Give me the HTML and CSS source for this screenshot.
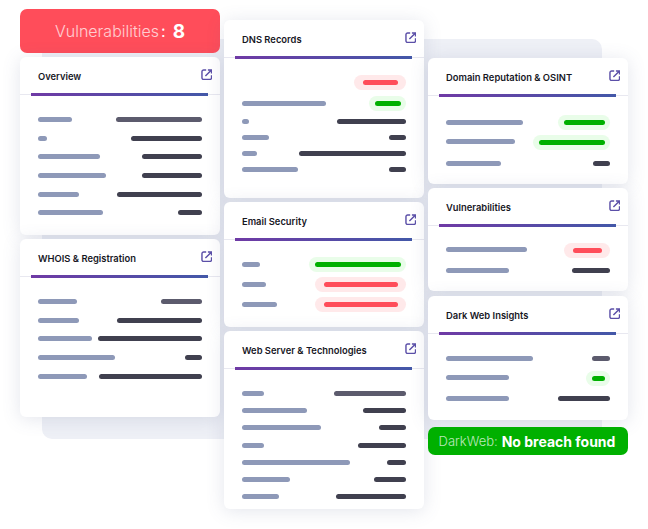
FILE: index.html
```html
<!DOCTYPE html>
<html>

<head>
<link rel="stylesheet" href="styles.css">
<title>Domain report</title>
</head>
<body>
  <svg class="sprite">
    <symbol id="open" viewBox="0 0 12 12">
      <path d="M5.4 1H2.8A1.8 1.8 0 0 0 1 2.8v6.4A1.8 1.8 0 0 0 2.8 11h6.4A1.8 1.8 0 0 0 11 9.2V6.6"/>
      <path d="M4.6 7.4 10.4 1.6M7.2 1H11v3.8"/>
    </symbol>
  </svg>

  <div class="board">
    <div class="board__backdrop"></div>

    <div class="column column--first">
      <div class="banner banner--red">
        <span class="banner__label">Vulnerabilities</span><span class="banner__colon">:</span>
        <b class="banner__value banner__value--big">8</b>
      </div>

      <section class="card card--tall">
        <div class="card__head">
          <h3 class="card__title">Overview</h3>
          <svg class="card__icon"><use href="#open"/></svg>
        </div>
        <div class="card__rule"></div>
        <div class="rows rows--overview">
          <div class="row"><i class="bar bar--label" style="width:34px"></i><i class="bar bar--soft" style="width:86px"></i></div>
          <div class="row"><i class="bar bar--label" style="width:9px"></i><i class="bar bar--value" style="width:71px"></i></div>
          <div class="row"><i class="bar bar--label" style="width:62px"></i><i class="bar bar--value" style="width:60px"></i></div>
          <div class="row"><i class="bar bar--label" style="width:68px"></i><i class="bar bar--value" style="width:60px"></i></div>
          <div class="row"><i class="bar bar--label" style="width:41px"></i><i class="bar bar--value" style="width:85px"></i></div>
          <div class="row"><i class="bar bar--label" style="width:65px"></i><i class="bar bar--value" style="width:24px"></i></div>
        </div>
      </section>

      <section class="card card--tall">
        <div class="card__head">
          <h3 class="card__title">WHOIS &amp; Registration</h3>
          <svg class="card__icon"><use href="#open"/></svg>
        </div>
        <div class="card__rule"></div>
        <div class="rows rows--overview">
          <div class="row"><i class="bar bar--label" style="width:39px"></i><i class="bar bar--soft" style="width:41px"></i></div>
          <div class="row"><i class="bar bar--label" style="width:41px"></i><i class="bar bar--value" style="width:85px"></i></div>
          <div class="row"><i class="bar bar--label" style="width:54px"></i><i class="bar bar--value" style="width:104px"></i></div>
          <div class="row"><i class="bar bar--label" style="width:77px"></i><i class="bar bar--value" style="width:17px"></i></div>
          <div class="row"><i class="bar bar--label" style="width:49px"></i><i class="bar bar--value" style="width:103px"></i></div>
        </div>
      </section>
    </div>

    <div class="column column--second">
      <section class="card card--tall">
        <div class="card__head">
          <h3 class="card__title">DNS Records</h3>
          <svg class="card__icon"><use href="#open"/></svg>
        </div>
        <div class="card__rule"></div>
        <div class="rows rows--dns">
          <div class="row row--high"><span></span><span class="pill pill--red"><i class="bar bar--red" style="width:35px"></i></span></div>
          <div class="row row--high"><i class="bar bar--label" style="width:84px"></i><span class="pill pill--green"><i class="bar bar--green" style="width:26px"></i></span></div>
          <div class="row"><i class="bar bar--label" style="width:7px"></i><i class="bar bar--value" style="width:69px"></i></div>
          <div class="row"><i class="bar bar--label" style="width:27px"></i><i class="bar bar--value" style="width:17px"></i></div>
          <div class="row"><i class="bar bar--label" style="width:15px"></i><i class="bar bar--value" style="width:107px"></i></div>
          <div class="row"><i class="bar bar--label" style="width:56px"></i><i class="bar bar--value" style="width:17px"></i></div>
        </div>
      </section>

      <section class="card card--mid">
        <div class="card__head">
          <h3 class="card__title">Email Security</h3>
          <svg class="card__icon"><use href="#open"/></svg>
        </div>
        <div class="card__rule"></div>
        <div class="rows rows--wide">
          <div class="row"><i class="bar bar--label" style="width:18px"></i><span class="pill pill--green"><i class="bar bar--green" style="width:86px"></i></span></div>
          <div class="row"><i class="bar bar--label" style="width:24px"></i><span class="pill pill--red"><i class="bar bar--red" style="width:74px"></i></span></div>
          <div class="row"><i class="bar bar--label" style="width:35px"></i><span class="pill pill--red"><i class="bar bar--red" style="width:74px"></i></span></div>
        </div>
      </section>

      <section class="card card--tall">
        <div class="card__head">
          <h3 class="card__title">Web Server &amp; Technologies</h3>
          <svg class="card__icon"><use href="#open"/></svg>
        </div>
        <div class="card__rule"></div>
        <div class="rows rows--web">
          <div class="row"><i class="bar bar--label" style="width:22px"></i><i class="bar bar--soft" style="width:72px"></i></div>
          <div class="row"><i class="bar bar--label" style="width:65px"></i><i class="bar bar--value" style="width:43px"></i></div>
          <div class="row"><i class="bar bar--label" style="width:79px"></i><i class="bar bar--value" style="width:27px"></i></div>
          <div class="row"><i class="bar bar--label" style="width:22px"></i><i class="bar bar--value" style="width:48px"></i></div>
          <div class="row"><i class="bar bar--label" style="width:108px"></i><i class="bar bar--value" style="width:19px"></i></div>
          <div class="row"><i class="bar bar--label" style="width:48px"></i><i class="bar bar--value" style="width:32px"></i></div>
          <div class="row"><i class="bar bar--label" style="width:37px"></i><i class="bar bar--value" style="width:70px"></i></div>
        </div>
      </section>
    </div>

    <div class="column column--third">
      <section class="card card--mid card--domain">
        <div class="card__head">
          <h3 class="card__title">Domain Reputation &amp; OSINT</h3>
          <svg class="card__icon"><use href="#open"/></svg>
        </div>
        <div class="card__rule"></div>
        <div class="rows rows--domain">
          <div class="row"><i class="bar bar--label" style="width:77px"></i><span class="pill pill--green"><i class="bar bar--green" style="width:41px"></i></span></div>
          <div class="row row--raised"><i class="bar bar--label" style="width:69px"></i><span class="pill pill--green"><i class="bar bar--green" style="width:66px"></i></span></div>
          <div class="row"><i class="bar bar--label" style="width:55px"></i><i class="bar bar--value" style="width:17px"></i></div>
        </div>
      </section>

      <section class="card card--short">
        <div class="card__head">
          <h3 class="card__title">Vulnerabilities</h3>
          <svg class="card__icon"><use href="#open"/></svg>
        </div>
        <div class="card__rule"></div>
        <div class="rows rows--wide">
          <div class="row row--raised"><i class="bar bar--label" style="width:81px"></i><span class="pill pill--red"><i class="bar bar--red" style="width:29px"></i></span></div>
          <div class="row"><i class="bar bar--label" style="width:63px"></i><i class="bar bar--value" style="width:38px"></i></div>
        </div>
      </section>

      <section class="card card--dark">
        <div class="card__head">
          <h3 class="card__title">Dark Web Insights</h3>
          <svg class="card__icon"><use href="#open"/></svg>
        </div>
        <div class="card__rule"></div>
        <div class="rows rows--wide">
          <div class="row"><i class="bar bar--label" style="width:87px"></i><i class="bar bar--soft" style="width:18px"></i></div>
          <div class="row row--raised"><i class="bar bar--label" style="width:63px"></i><span class="pill pill--green"><i class="bar bar--green" style="width:13px"></i></span></div>
          <div class="row"><i class="bar bar--label" style="width:63px"></i><i class="bar bar--value" style="width:52px"></i></div>
        </div>
      </section>

      <div class="banner banner--green">
        <span class="banner__label">DarkWeb:</span>
        <b class="banner__value">No breach found</b>
      </div>
    </div>
  </div>
</body>
</html>
```

FILE: styles.css
```css
* { box-sizing: border-box; }
body {
  margin: 0;
  background: white;
  font-family: Inter, "Noto Sans", sans-serif;
}

.sprite {
  display: none;
}

.board {
  position: relative;
  display: flex;
  gap: 4px;
  width: 648px;
  height: 529px;
  padding-left: 20px;
  overflow: hidden;
}

/* pale panel behind the cards */
.board__backdrop {
  position: absolute;
  top: 39px;
  left: 42px;
  width: 560px;
  height: 400px;
  border-radius: 10px;
  background: #eef0f6;
}

.column {
  position: relative;
  display: flex;
  flex-direction: column;
  width: 200px;
  gap: 4px;
}

.column--first { padding-top: 9px; }
.column--second { padding-top: 20px; }
.column--third { padding-top: 58px; }

.banner {
  display: flex;
  align-items: center;
  justify-content: center;
  border-radius: 7px;
  color: white;
}

.banner--red {
  height: 44px;
  background: #ff4d5a;
  font-size: 16px;
}

.banner--green {
  height: 28px;
  gap: 4px;
  margin-top: 3px;
  padding-right: 2px;
  background: #00b000;
  font-size: 13px;
}

.banner__label {
  font-weight: 300;
  opacity: 0.72;
}

.banner__colon {
  margin: 0 7px 0 2px;
  font-weight: 400;
}

.banner__value {
  font-weight: 700;
  font-size: 14px;
}

.banner__value--big {
  font-size: 19px;
}

.card {
  border-radius: 6px;
  background: white;
  box-shadow: 0 2px 18px rgba(90, 100, 140, 0.17);
}

.card--tall { height: 178px; }
.card--mid { height: 125px; }
.card--short { height: 103px; }
.card--dark { height: 124px; margin-top: 1px; }
.card--domain { height: 126px; }

.card__head {
  display: flex;
  align-items: center;
  justify-content: space-between;
  height: 36px;
  padding: 3px 8px 0 18px;
}

.card__title {
  margin: 0;
  color: #17171f;
  font-size: 9.4px;
  font-weight: 600;
}

.card__icon {
  width: 11.5px;
  height: 11.5px;
  margin-top: -4px;
  fill: none;
  stroke: #5b4fa8;
  stroke-width: 1.5;
}

.card__rule {
  height: 3px;
  background:
    linear-gradient(90deg, #6f3aa5, #4358a8) 11px 0 / 177px 3px no-repeat,
    linear-gradient(#e8e8f0, #e8e8f0) 0 1px / 100% 1px no-repeat;
}

.rows {
  padding: calc(23.5px - var(--pitch) / 2) 18px 0;
}

.rows--overview { --pitch: 18.7px; }
.rows--dns { --pitch: 16px; padding-top: 13px; }
.rows--wide { --pitch: 20px; }
.rows--domain { --pitch: 20.8px; padding-top: 14.8px; }
.rows--web { --pitch: 17.2px; }

.row {
  display: flex;
  align-items: center;
  justify-content: space-between;
  height: var(--pitch);
}

.row--high { height: 20.7px; }
.row--raised .bar--label { margin-bottom: 3px; }

.bar {
  display: block;
  height: 5px;
  border-radius: 3px;
}

.bar--label { background: #8e99b8; }
.bar--value { background: #40404f; }
.bar--soft { background: #5c5b6d; }
.bar--red { background: #ff4d5a; }
.bar--green { background: #00b000; }

.pill {
  display: flex;
  align-items: center;
  height: 15px;
  border-radius: 8px;
}

.pill--red {
  padding: 0 8.5px;
  background: #ffe9ea;
}

.pill--green {
  padding: 0 5.5px;
  background: #e9fde9;
}
```
